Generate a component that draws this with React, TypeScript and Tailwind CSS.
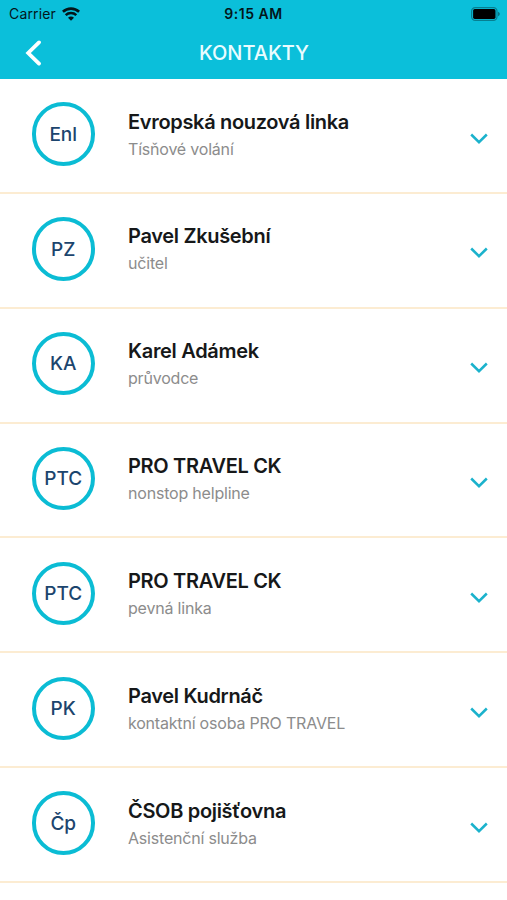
interface Contact {
  initials: string;
  name: string;
  role: string;
}

const contacts: Contact[] = [
  { initials: 'Enl', name: 'Evropská nouzová linka', role: 'Tísňové volání' },
  { initials: 'PZ', name: 'Pavel Zkušební', role: 'učitel' },
  { initials: 'KA', name: 'Karel Adámek', role: 'průvodce' },
  { initials: 'PTC', name: 'PRO TRAVEL CK', role: 'nonstop helpline' },
  { initials: 'PTC', name: 'PRO TRAVEL CK', role: 'pevná linka' },
  { initials: 'PK', name: 'Pavel Kudrnáč', role: 'kontaktní osoba PRO TRAVEL' },
  { initials: 'Čp', name: 'ČSOB pojišťovna', role: 'Asistenční služba' },
];

function WifiIcon() {
  return (
    <svg className="ml-[6px] h-[14px] w-[18px]" viewBox="0 0 18 14" fill="none">
      <path d="M0.9 4.8C5.4 0.5 12.6 0.5 17.1 4.8" stroke="#03161a" strokeWidth="2.6" />
      <path d="M3.7 8.1C6.6 5.3 11.4 5.3 14.3 8.1" stroke="#03161a" strokeWidth="2.5" />
      <path d="M6 10.7C7.7 9.1 10.3 9.1 12 10.7L9 13.7Z" fill="#03161a" />
    </svg>
  );
}

function BatteryIcon() {
  return (
    <svg className="h-[14px] w-[30px]" viewBox="0 0 30 14" fill="none">
      <rect x="0.6" y="0.6" width="25.4" height="12.8" rx="3.6" stroke="#067f91" strokeWidth="1.2" />
      <rect x="2.1" y="2.1" width="22.4" height="9.8" rx="1.6" fill="#000" />
      <path d="M27 4.8C29.4 5.8 29.4 8.2 27 9.2Z" fill="#067687" />
    </svg>
  );
}

function StatusBar() {
  return (
    <div className="grid h-[27px] grid-cols-[1fr_auto_1fr] items-center text-[#03161a]">
      <div className="flex items-center pl-[9px]">
        <span className="text-[14px] tracking-[0.15px]">Carrier</span>
        <WifiIcon />
      </div>
      <span className="text-[14px] font-semibold tracking-[0.5px]">9:15 AM</span>
      <div className="flex justify-end pr-[6px]">
        <BatteryIcon />
      </div>
    </div>
  );
}

function ContactRow({ initials, name, role }: Contact) {
  return (
    <li className="flex h-[114.85px] shrink-0 items-start border-b-2 border-[#fcecd2] pl-[31.5px] pr-[19px]">
      <div className="mt-[23.3px] flex h-[63.5px] w-[63.5px] shrink-0 items-center justify-center rounded-full border-4 border-[#0bbcd4] pt-[2px] text-[19px] font-medium text-[#1c456e]">
        {initials}
      </div>
      <div className="ml-[33px] mt-[29.6px] flex-1">
        <div className="text-[20px] font-semibold leading-[26px] tracking-[-0.32px] text-[#161819]">{name}</div>
        <div className="mt-[3px] text-[16px] leading-[22px] tracking-[-0.2px] text-[#8c8c8c]">{role}</div>
      </div>
      <svg className="mt-[53.6px] h-3 w-[18px]" viewBox="0 0 18 12" fill="none">
        <path d="M1.2 1.5L9 9.2L16.8 1.5" stroke="#1bb2cc" strokeWidth="2.5" />
      </svg>
    </li>
  );
}

export default function App() {
  return (
    <div className="flex h-[900px] w-[507px] flex-col overflow-hidden bg-white font-['Inter',sans-serif]">
      <header className="h-[79px] shrink-0 bg-[#0bbfda]">
        <StatusBar />
        <div className="grid h-[51px] grid-cols-[1fr_auto_1fr] items-center">
          <svg className="ml-[25px] h-[26px] w-4" viewBox="0 0 16 26" fill="none">
            <path d="M14 2.4L3.2 13L14 23.6" stroke="white" strokeWidth="3.8" strokeLinecap="round" />
          </svg>
          <h1 className="pl-px text-[20px] font-medium text-[#eafcff]">KONTAKTY</h1>
        </div>
      </header>
      <ul className="flex flex-col">
        {contacts.map((contact, index) => (
          <ContactRow key={index} {...contact} />
        ))}
      </ul>
    </div>
  );
}
